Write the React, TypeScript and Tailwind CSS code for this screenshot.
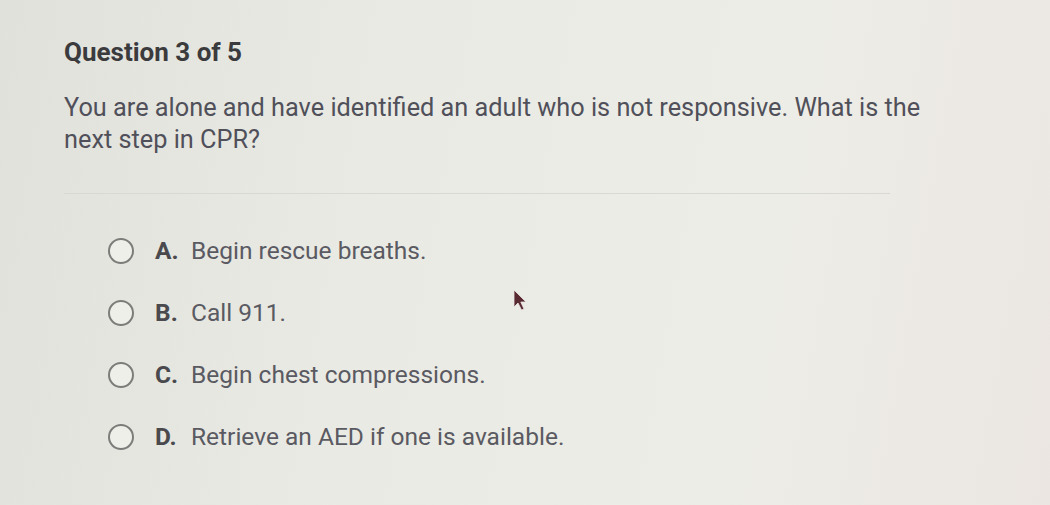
const options = [
  { letter: 'A.', text: 'Begin rescue breaths.' },
  { letter: 'B.', text: 'Call 911.' },
  { letter: 'C.', text: 'Begin chest compressions.' },
  { letter: 'D.', text: 'Retrieve an AED if one is available.' },
]

function Radio() {
  return <span className="block h-[26px] w-[26px] shrink-0 rounded-full border-2 border-[#7c7c7a] bg-[#efefe9]" />
}

function Pointer() {
  return (
    <svg className="absolute left-[512px] top-[289px]" width="18" height="24" viewBox="0 0 18 24">
      <path d="M2 1 L2 18 L6 14 L9.5 21 L12 20 L8.8 13 L14 13 Z" fill="#5a2a33" stroke="#e9e7e2" strokeWidth="0.8" />
    </svg>
  )
}

export default function App() {
  return (
    <main className="relative h-[505px] w-[1050px] overflow-hidden bg-[linear-gradient(100deg,#e1e1db_0%,#eaeae4_35%,#edede7_70%,#ebe6e1_100%)] font-['Roboto',sans-serif]">
      <div className="px-[64px] pt-[36px]">
        <h1 className="text-[26px] font-bold leading-[32px] text-[#3b3b3d]">Question 3 of 5</h1>
        <p className="mt-[24px] w-[880px] text-[25.3px] leading-[32px] text-[#50505a]">
          You are alone and have identified an adult who is not responsive. What is the next step in CPR?
        </p>
        <div className="mt-[37px] h-px w-[826px] bg-[#d9d9d3]" />
        <ul className="mt-[26px] pl-[44px]">
          {options.map((o) => (
            <li key={o.letter} className="flex h-[62px] items-center">
              <Radio />
              <span className="ml-[21px] w-[36px] text-[24.5px] font-bold text-[#4a4a4e]">{o.letter}</span>
              <span className="text-[24.5px] text-[#5a5a62]">{o.text}</span>
            </li>
          ))}
        </ul>
      </div>
      <Pointer />
    </main>
  )
}
